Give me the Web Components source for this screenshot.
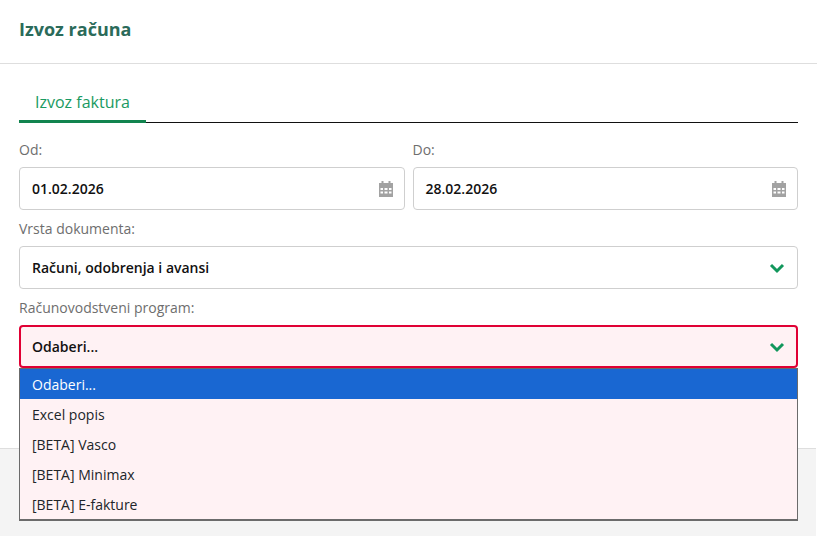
<!DOCTYPE html>
<html lang="hr"><head><meta charset="utf-8"><title>Izvoz računa</title>
<style>
html,body{margin:0;padding:0;background:#fff}
body{font-family:"Open Sans",sans-serif;width:817px;height:536px;overflow:hidden}
</style></head><body>
<export-dialog>
  <tab-bar label="Izvoz faktura"></tab-bar>
  <div style="display:flex;gap:8px">
    <form-field label="Od:" style="flex:1"><field-box value="01.02.2026" icon="calendar"></field-box></form-field>
    <form-field label="Do:" style="flex:1"><field-box value="28.02.2026" icon="calendar"></field-box></form-field>
  </div>
  <form-field label="Vrsta dokumenta:"><field-box value="Računi, odobrenja i avansi" icon="chevron"></field-box></form-field>
  <form-field label="Računovodstveni program:">
    <field-box value="Odaberi..." icon="chevron" invalid></field-box>
    <option-list>
      <option-row selected>Odaberi...</option-row>
      <option-row>Excel popis</option-row>
      <option-row>[BETA] Vasco</option-row>
      <option-row>[BETA] Minimax</option-row>
      <option-row>[BETA] E-fakture</option-row>
    </option-list>
  </form-field>
</export-dialog>
<script>
function def(name, html){
  customElements.define(name, class extends HTMLElement{
    connectedCallback(){
      if(this.shadowRoot) return;
      const r=this.attachShadow({mode:'open'});
      r.innerHTML=typeof html==='function'?html(this):html;
    }
  });
}
def('export-dialog',`<style>
:host{display:flex;flex-direction:column;width:817px;height:536px;box-sizing:border-box;position:relative;color:#212529}
header{height:64px;box-sizing:border-box;border-bottom:1px solid #dedede;padding:0 19px 5px;display:flex;align-items:center;flex:none}
h1{margin:0;font:700 18px/24px "Open Sans",sans-serif;color:#2b6b5a}
main{padding:0 19px;height:384px;box-sizing:border-box;flex:none;background:#fff}
footer{flex:1;background:#f4f4f4;border-top:1px solid #dedede;margin-right:1px}
</style><header><h1>Izvoz računa</h1></header><main><slot></slot></main><footer></footer>`);
def('tab-bar',t=>`<style>
:host{display:block;height:67px;box-sizing:border-box;padding-top:21px}
div{border-bottom:1px solid #111;height:38px;box-sizing:border-box;display:flex}
span{display:block;height:38px;box-sizing:border-box;width:127px;padding-left:16px;font:400 16px/34px "Open Sans",sans-serif;color:#1a9a62;border-bottom:3px solid #12844f}
</style><div><span>${t.getAttribute('label')}</span></div>`);
def('form-field',t=>`<style>
:host{display:block;position:relative}
.l{display:block;height:36px;box-sizing:border-box;padding-top:9px;font:400 14px/19px "Open Sans",sans-serif;color:#6e6e6e}
</style><span class="l">${t.getAttribute('label')}</span><slot></slot>`);
const cal=`<svg width="16" height="16" viewBox="-1 0 16 16" fill="#a2a2a2"><path d="M3.500 0h2v3h-2zM10.500 0h2v3h-2z"/><path fill-rule="evenodd" d="M1 2h14v14H1zM2.500 7v2h2.500V7zM6.500 7v2h3V7zM11 7v2h2.500V7zM2.500 10.500v2h2.500v-2zM6.500 10.500v2h3v-2zM11 10.500v2h2.500v-2z"/></svg>`;
const chev=`<svg width="16" height="12" viewBox="0 0 16 12" fill="none" stroke="#12975c" stroke-width="3"><path d="M2 3l6 6 6-6"/></svg>`;
def('field-box',t=>{
 const inv=t.hasAttribute('invalid');
 const isCal=t.getAttribute('icon')==='calendar';
 return `<style>
:host{display:flex;align-items:center;justify-content:space-between;height:43px;box-sizing:border-box;border-radius:4px;padding:0 ${isCal||inv?11:12}px 0 ${inv?11:12}px;
 border:${inv?'2px solid #e00034':'1px solid #cfcfcf'};background:${inv?'#fff2f4':'#fff'};font:600 14px/20px "Open Sans",sans-serif;color:#111}
svg{display:block;flex:none}
</style><span>${t.getAttribute('value')}</span>${isCal?cal:chev}`});
def('option-list',`<style>
:host{display:block;position:absolute;left:0;right:0;top:100%;box-sizing:border-box;height:153px;background:#fff2f4;border:1px solid #6b6b6b;border-bottom-width:2px;z-index:5}
</style><slot></slot>`);
def('option-row',t=>`<style>
:host{display:block;height:30px;box-sizing:border-box;padding:1px 0 0 12px;font:400 14px/30px "Open Sans",sans-serif;color:${t.hasAttribute('selected')?'#fff':'#212529'};background:${t.hasAttribute('selected')?'#1967d2':'transparent'}}
</style><slot></slot>`);
</script>
</body></html>
